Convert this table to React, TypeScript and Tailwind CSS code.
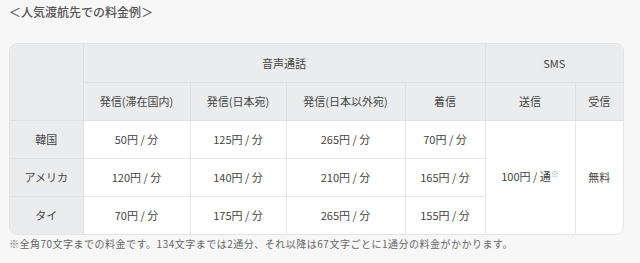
const font = { fontFamily: '"Noto Sans CJK JP", "Noto Sans", sans-serif' }

const rows = [
  { country: "韓国", prices: ["50円 / 分", "125円 / 分", "265円 / 分", "70円 / 分"] },
  { country: "アメリカ", prices: ["120円 / 分", "140円 / 分", "210円 / 分", "165円 / 分"] },
  { country: "タイ", prices: ["70円 / 分", "175円 / 分", "265円 / 分", "155円 / 分"] },
]

const head = "bg-[#ebecee] border border-[#dfe0e3] font-normal text-[#444] h-[38px] text-center align-middle"
const cell = "bg-white border border-[#e7e7e9] text-[#444] h-[38px] text-center align-middle"

export default function App() {
  return (
    <div className="min-h-screen bg-[#f7f7f7] px-[9px] pt-[4px]" style={font}>
      <h2 className="text-[12px] leading-[16px] font-medium tracking-normal text-[#555]">
        ＜人気渡航先での料金例＞
      </h2>

      <div className="mt-[23px] w-[615px] overflow-hidden rounded-[8px] border border-[#e3e4e6]">
        <table className="w-full table-fixed border-collapse border-hidden text-[11px] leading-[14px]">
          <colgroup>
            <col className="w-[73px]" />
            <col className="w-[107px]" />
            <col className="w-[96px]" />
            <col className="w-[119px]" />
            <col className="w-[80px]" />
            <col className="w-[90px]" />
            <col />
          </colgroup>
          <thead>
            <tr>
              <th rowSpan={2} className={head}></th>
              <th colSpan={4} className={head}>音声通話</th>
              <th colSpan={2} className={head}>SMS</th>
            </tr>
            <tr>
              <th className={head}>発信(滞在国内)</th>
              <th className={head}>発信(日本宛)</th>
              <th className={head}>発信(日本以外宛)</th>
              <th className={head}>着信</th>
              <th className={head}>送信</th>
              <th className={head}>受信</th>
            </tr>
          </thead>
          <tbody>
            {rows.map((r, i) => (
              <tr key={r.country}>
                <th className={head}>{r.country}</th>
                {r.prices.map((p, j) => (
                  <td key={j} className={cell}>{p}</td>
                ))}
                {i === 0 && (
                  <>
                    <td rowSpan={3} className={cell}>
                      100円 / 通<span className="relative top-[-4px] text-[8px] text-[#999]">※</span>
                    </td>
                    <td rowSpan={3} className={cell}>無料</td>
                  </>
                )}
              </tr>
            ))}
          </tbody>
        </table>
      </div>

      <p className="mt-[1px] text-[10px] leading-[16px] tracking-[0.05em] text-[#666]">
        ※全角70文字までの料金です。134文字までは2通分、それ以降は67文字ごとに1通分の料金がかかります。
      </p>
    </div>
  )
}
